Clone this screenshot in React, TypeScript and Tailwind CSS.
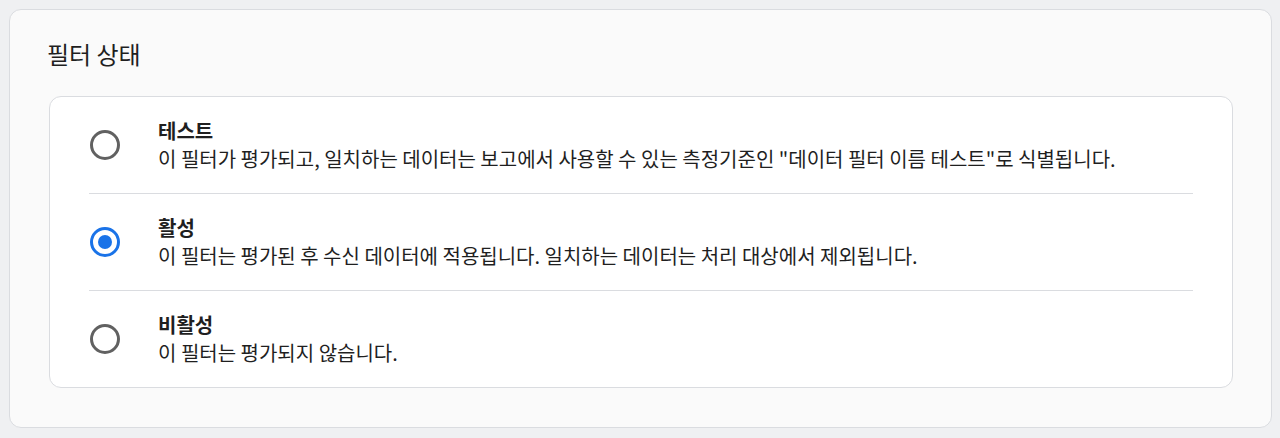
const options = [
  {
    title: "테스트",
    desc: '이 필터가 평가되고, 일치하는 데이터는 보고에서 사용할 수 있는 측정기준인 "데이터 필터 이름 테스트"로 식별됩니다.',
    checked: false,
  },
  {
    title: "활성",
    desc: "이 필터는 평가된 후 수신 데이터에 적용됩니다. 일치하는 데이터는 처리 대상에서 제외됩니다.",
    checked: true,
  },
  {
    title: "비활성",
    desc: "이 필터는 평가되지 않습니다.",
    checked: false,
  },
];

function Radio({ checked }: { checked: boolean }) {
  return checked ? (
    <span className="flex h-[30px] w-[30px] shrink-0 items-center justify-center rounded-full border-[3px] border-[#1a73e8]">
      <span className="block h-[14px] w-[14px] rounded-full bg-[#1a73e8]" />
    </span>
  ) : (
    <span className="block h-[30px] w-[30px] shrink-0 rounded-full border-[3px] border-[#616161]" />
  );
}

export default function App() {
  return (
    <div
      className="h-[438px] w-[1280px] bg-[#eff0f2] p-[9px] pr-[8px]"
      style={{ fontFamily: '"Noto Sans CJK KR", "Noto Sans", sans-serif' }}
    >
      <div className="h-[419px] rounded-[12px] border border-[#dadce0] bg-[#fafafa] pl-[39px] pr-[38px] pt-[26px]">
        <h1 className="-ml-[2px] text-[24px] leading-[36px] text-[#1f1f1f]">필터 상태</h1>
        <div className="mt-[24px] rounded-[12px] border border-[#dadce0] bg-white px-[39px]">
          {options.map((o, i) => (
            <div
              key={o.title}
              className={
                i === 0
                  ? "flex h-[96px] items-center"
                  : "flex h-[97px] items-center border-t border-[#dadce0]"
              }
            >
              <div className="w-[69px] pl-[1px]">
                <Radio checked={o.checked} />
              </div>
              <div className="text-[#1f1f1f]">
                <div className="text-[20px] font-bold leading-[28px]">{o.title}</div>
                <div className="text-[20px] leading-[28px]">{o.desc}</div>
              </div>
            </div>
          ))}
        </div>
      </div>
    </div>
  );
}
